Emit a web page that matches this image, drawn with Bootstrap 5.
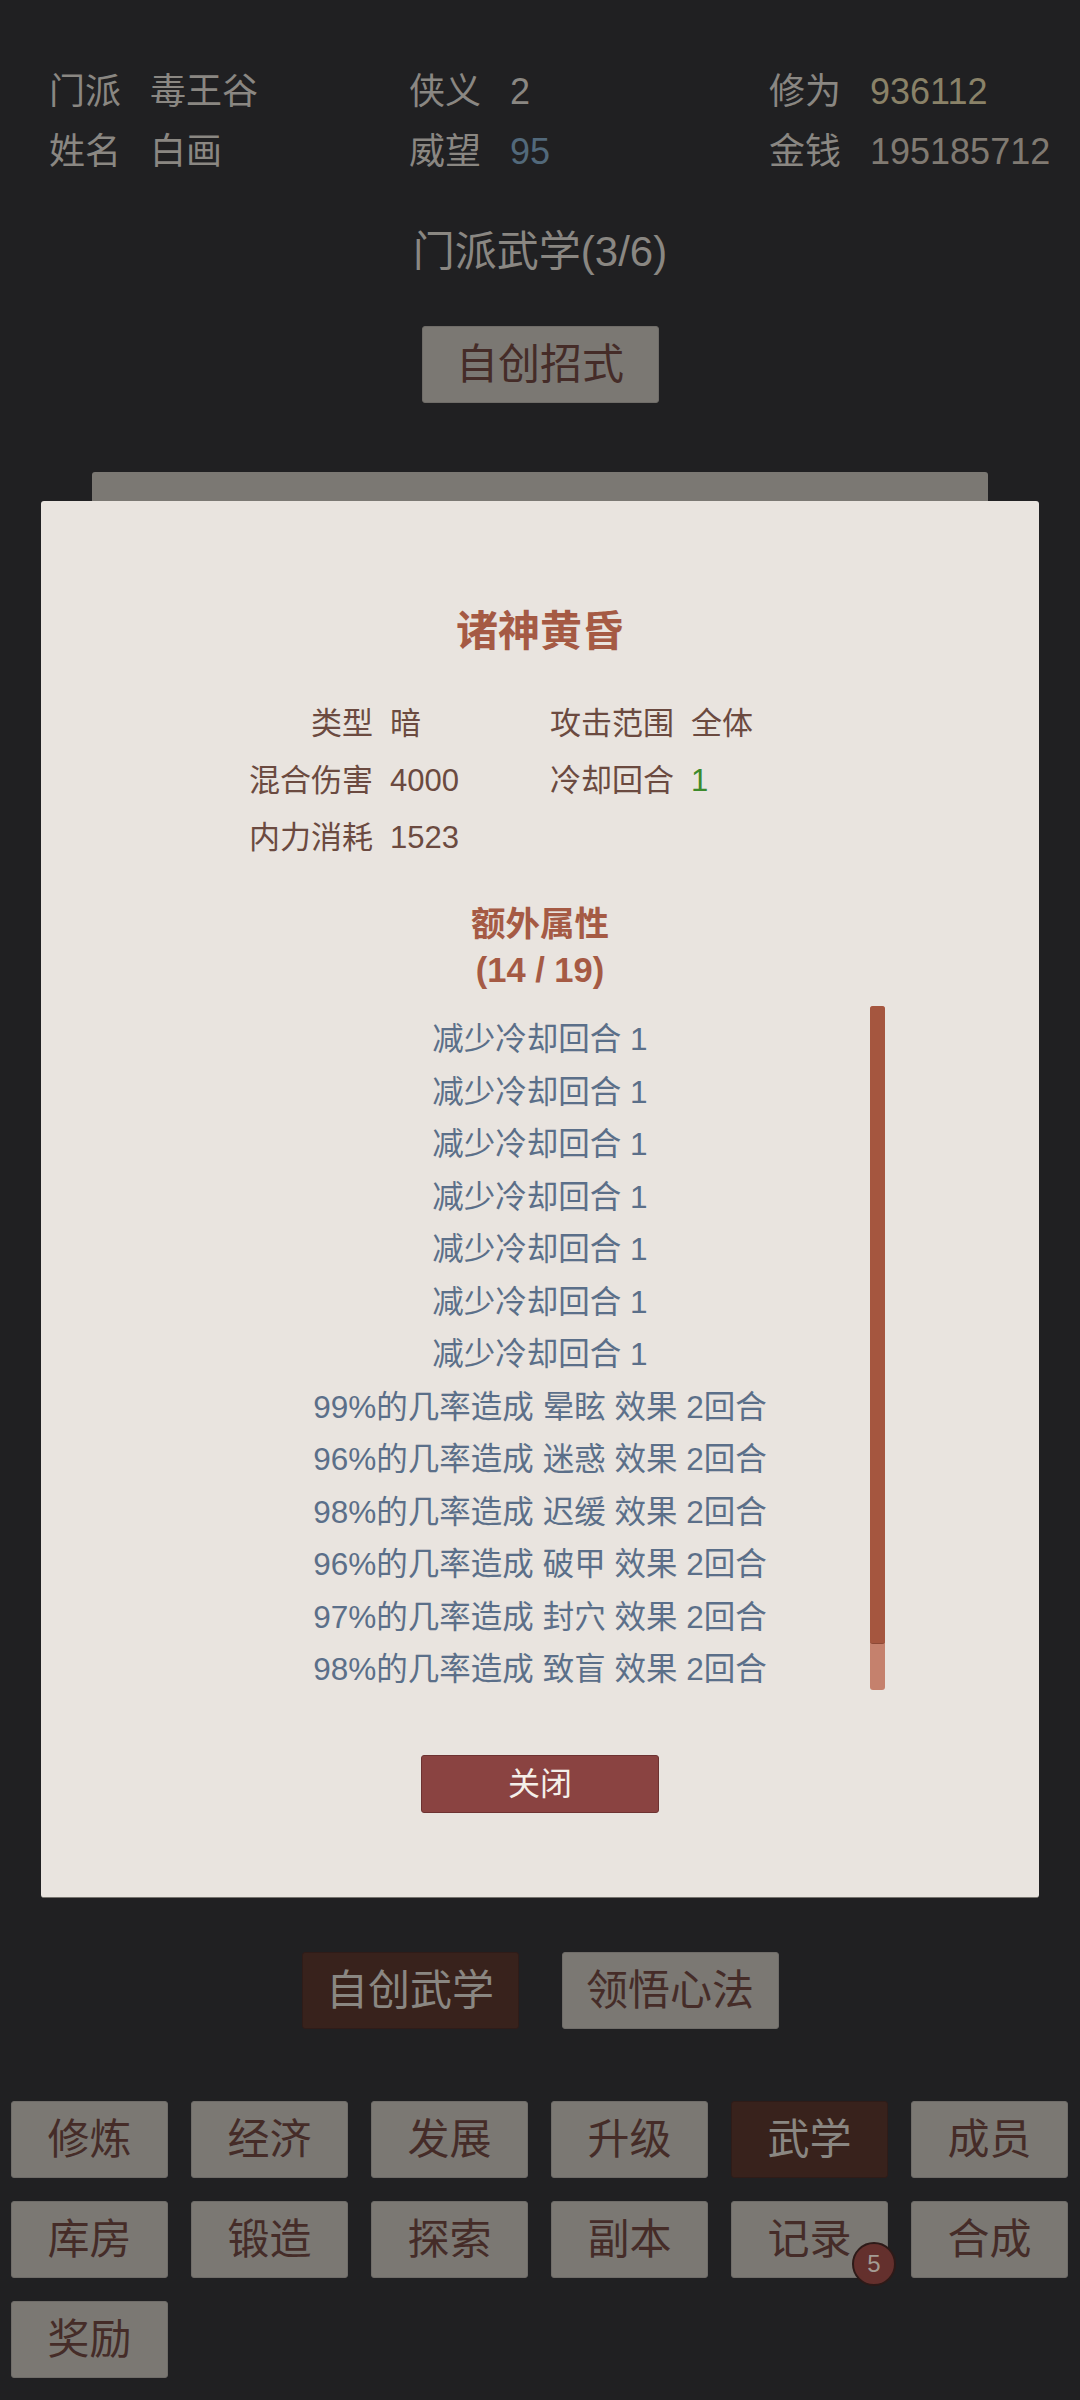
<!DOCTYPE html>
<html lang="en">
<head>
  <meta charset="UTF-8">
  <title>门派武学</title>
  <meta name="viewport" content="width=device-width, initial-scale=1">
  <link href="https://cdn.jsdelivr.net/npm/bootstrap@5.3.3/dist/css/bootstrap.min.css" rel="stylesheet">
  <style>
    html, body { height: 2400px; }
    body {
      background: #202022;
      font-family: "Liberation Sans", "Noto Sans CJK SC", sans-serif;
      color: #8a8782;
      overflow: hidden;
    }
    .page-wrap { height: 2400px; padding-top: 62px; }
    .info-grid { margin-left: 49px; height: 120px; display: grid; grid-template-columns: 360px 360px 1fr; grid-auto-rows: 60px; }
    .info-cell { display: flex; align-items: center; font-size: 36px; line-height: 60px; white-space: nowrap; }
    .info-label { width: 101px; }
    .val-gold { color: #8a8268; }
    .val-blue { color: #52697b; }
    .val-grey { color: #807a72; }
    .page-title { font-size: 42px; line-height: 60px; margin-top: 40px; color: #8a8782; }
    .game-btn {
      background: #7b7873;
      color: #452c28;
      border: 1px solid #6f6c68;
      border-radius: 3px;
      font-size: 42px;
      line-height: 75px;
      padding: 0;
    }
    .game-btn.on { background: #38221c; color: #8a8782; border-color: #2f1c18; }
    .btn-make { width: 237px; height: 77px; margin-top: 44px; }
    .stack-wrap { margin-top: 69px; height: 1426px; position: relative; }
    .back-sheet { position: absolute; left: 92px; right: 92px; top: 0; height: 40px; background: #7b7873; border-radius: 3px; }
    .dialog-sheet {
      position: absolute; left: 41px; right: 41px; top: 29px; height: 1397px;
      background: #e9e4df; border-radius: 3px; border-bottom: 1px solid #77746e;
    }
    .dlg-title { font-size: 42px; font-weight: 700; color: #a55a44; line-height: 60px; margin-top: 101px; }
    .stat-grid { margin-top: 34px; display: grid; grid-template-columns: 301px 301px; justify-content: start; margin-left: 207px; grid-auto-rows: 57px; font-size: 31px; color: #6b4a40; }
    .stat-cell { display: flex; align-items: center; white-space: nowrap; }
    .stat-label { text-align: right; flex: 0 0 125px; margin-right: 17px; }
    .val-green { color: #3d8a2c; }
    .sub-title { font-size: 34.5px; font-weight: 700; color: #a55a44; line-height: 46px; margin-top: 34px; }
    .attr-wrap { position: relative; margin-top: 13px; height: 684px; }
    #attr-list { padding-top: 7px; }
    .attr-row { font-size: 31.5px; line-height: 52.5px; color: #5b6f89; height: 52.5px; white-space: nowrap; }
    .scroll-track { position: absolute; left: 829px; top: 0; width: 15px; height: 684px; background: #c5816d; border-radius: 3px; }
    .scroll-thumb { height: 638px; background: #a5563f; border-radius: 3px; border-bottom: 1px solid #8d4936; }
    .btn-close-dlg { background: #8a4341; color: #f4efe9; border: 1px solid #6d3231; border-radius: 3px; width: 238px; height: 58px; font-size: 32px; line-height: 54px; padding: 0; margin-top: 65px; }
    .tab-row { margin-top: 54px; gap: 43px; }
    .tab-row .game-btn { width: 217px; height: 77px; }
    .nav-grid { margin: 72px 11px 0; display: grid; grid-template-columns: repeat(6, 157px); column-gap: 23px; grid-auto-rows: 77px; row-gap: 23px; }
    .nav-grid .game-btn { position: relative; }
    .dot-count { position: absolute; right: -9px; bottom: -9px; width: 44px; height: 44px; border-radius: 50%; background: #64302d; border: 2px solid #2d1a18; color: #a39b93; font-size: 24px; line-height: 40px; }
  </style>
</head>
<body>
  <div class="page-wrap">
    <div class="info-grid">
      <div class="info-cell"><span class="info-label">门派</span><span>毒王谷</span></div>
      <div class="info-cell"><span class="info-label">侠义</span><span>2</span></div>
      <div class="info-cell"><span class="info-label">修为</span><span class="val-gold">936112</span></div>
      <div class="info-cell"><span class="info-label">姓名</span><span>白画</span></div>
      <div class="info-cell"><span class="info-label">威望</span><span class="val-blue">95</span></div>
      <div class="info-cell"><span class="info-label">金钱</span><span class="val-grey">195185712</span></div>
    </div>
    <div class="page-title text-center">门派武学(3/6)</div>
    <div class="text-center"><button class="btn game-btn btn-make">自创招式</button></div>

    <div class="stack-wrap">
      <div class="back-sheet"></div>
      <div class="dialog-sheet text-center">
        <div class="dlg-title">诸神黄昏</div>
        <div class="stat-grid">
          <div class="stat-cell"><span class="stat-label">类型</span><span>暗</span></div>
          <div class="stat-cell"><span class="stat-label">攻击范围</span><span>全体</span></div>
          <div class="stat-cell"><span class="stat-label">混合伤害</span><span>4000</span></div>
          <div class="stat-cell"><span class="stat-label">冷却回合</span><span class="val-green">1</span></div>
          <div class="stat-cell"><span class="stat-label">内力消耗</span><span>1523</span></div>
        </div>
        <div class="sub-title">额外属性<br>(14 / 19)</div>
        <div class="attr-wrap">
          <div id="attr-list"></div>
          <div class="scroll-track"><div class="scroll-thumb"></div></div>
        </div>
        <button class="btn btn-close-dlg">关闭</button>
      </div>
    </div>

    <div class="d-flex justify-content-center tab-row">
      <button class="btn game-btn on">自创武学</button>
      <button class="btn game-btn">领悟心法</button>
    </div>

    <div class="nav-grid" id="nav-grid"></div>
  </div>

  <script src="https://cdn.jsdelivr.net/npm/bootstrap@5.3.3/dist/js/bootstrap.bundle.min.js"></script>
  <script>
    const attrs = [
      '减少冷却回合 1', '减少冷却回合 1', '减少冷却回合 1', '减少冷却回合 1',
      '减少冷却回合 1', '减少冷却回合 1', '减少冷却回合 1',
      '99%的几率造成 晕眩 效果 2回合', '96%的几率造成 迷惑 效果 2回合',
      '98%的几率造成 迟缓 效果 2回合', '96%的几率造成 破甲 效果 2回合',
      '97%的几率造成 封穴 效果 2回合', '98%的几率造成 致盲 效果 2回合'
    ];
    document.getElementById('attr-list').innerHTML = attrs.map(a => `<div class="attr-row">${a}</div>`).join('');

    const navs = ['修炼', '经济', '发展', '升级', '武学', '成员', '库房', '锻造', '探索', '副本', '记录', '合成', '奖励'];
    document.getElementById('nav-grid').innerHTML = navs.map(n => {
      const on = n === '武学' ? ' on' : '';
      const dot = n === '记录' ? '<span class="dot-count">5</span>' : '';
      return `<button class="btn game-btn${on}">${n}${dot}</button>`;
    }).join('');
  </script>
</body>
</html>
